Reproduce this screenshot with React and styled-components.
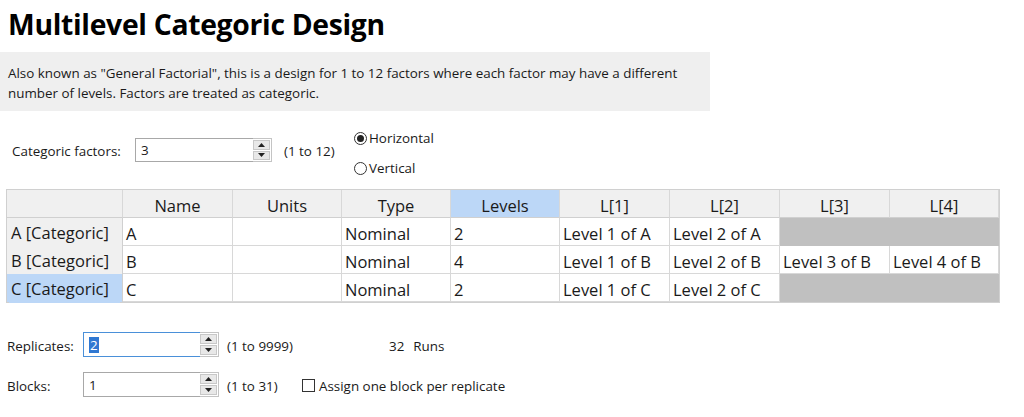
import styled, { createGlobalStyle } from 'styled-components';

const GlobalStyle = createGlobalStyle`
  body {
    margin: 0;
    background: #ffffff;
    font-family: 'Open Sans', 'Noto Sans', sans-serif;
    color: #1a1a1a;
  }
`;

const columns = [
  { label: 'Name', width: 110 },
  { label: 'Units', width: 109 },
  { label: 'Type', width: 109 },
  { label: 'Levels', width: 109 },
  { label: 'L[1]', width: 110 },
  { label: 'L[2]', width: 110 },
  { label: 'L[3]', width: 110 },
  { label: 'L[4]', width: 109 },
];

const factors = [
  { id: 'A', levels: 2 },
  { id: 'B', levels: 4 },
  { id: 'C', levels: 2, selected: true },
];

const Spinner = () => (
  <SpinBox>
    <SpinButton>
      <svg width="7" height="4" viewBox="0 0 7 4">
        <path d="M0 4 L3.5 0 L7 4 Z" fill="#222" />
      </svg>
    </SpinButton>
    <SpinButton>
      <svg width="7" height="4" viewBox="0 0 7 4">
        <path d="M0 0 L3.5 4 L7 0 Z" fill="#222" />
      </svg>
    </SpinButton>
  </SpinBox>
);

const NumberField = ({ value, width, height = 24, focused }) => (
  <Field $width={width} $height={height}>
    <FieldInput $focused={focused}>
      {focused ? <Selected>{value}</Selected> : value}
    </FieldInput>
    <Spinner />
  </Field>
);

const App = () => (
  <Page>
    <GlobalStyle />
    <Title>Multilevel Categoric Design</Title>
    <Description>
      Also known as &quot;General Factorial&quot;, this is a design for 1 to 12 factors where each factor may have a
      different
      <br />
      number of levels. Factors are treated as categoric.
    </Description>

    <FactorRow>
      <Label>Categoric factors:</Label>
      <NumberField value="3" width={137} />
      <Hint $gap={12} $width={70}>
        (1 to 12)
      </Hint>
      <RadioGroup>
        <RadioOption>
          <Radio $checked />
          Horizontal
        </RadioOption>
        <RadioOption>
          <Radio />
          Vertical
        </RadioOption>
      </RadioGroup>
    </FactorRow>

    <Grid $template={columns.map((c) => `${c.width}px`).join(' ')}>
      <Corner />
      {columns.map((col) => (
        <HeadCell key={col.label} $selected={col.label === 'Levels'}>
          {col.label}
        </HeadCell>
      ))}
      {factors.map((f) => (
        <Row key={f.id}>
          <RowHead $selected={f.selected}>
            <span>{f.id} [Categoric]</span>
          </RowHead>
          <Cell>{f.id}</Cell>
          <Cell />
          <Cell>Nominal</Cell>
          <Cell>{f.levels}</Cell>
          {[1, 2, 3, 4].map((n) =>
            n <= f.levels ? (
              <Cell key={n}>
                Level {n} of {f.id}
              </Cell>
            ) : (
              <Cell key={n} $disabled />
            ),
          )}
        </Row>
      ))}
    </Grid>

    <Options>
      <OptionRow>
        <OptionLabel>Replicates:</OptionLabel>
        <NumberField value="2" width={136} height={25} focused />
        <Hint $gap={8} $width={162}>
          (1 to 9999)
        </Hint>
        <Runs>
          <span>32</span>
          <span>Runs</span>
        </Runs>
      </OptionRow>
      <OptionRow>
        <OptionLabel>Blocks:</OptionLabel>
        <NumberField value="1" width={136} height={25} />
        <Hint $gap={8} $width={75}>
          (1 to 31)
        </Hint>
        <CheckLabel>
          <Checkbox />
          Assign one block per replicate
        </CheckLabel>
      </OptionRow>
    </Options>
  </Page>
);

export default App;

const Page = styled.div`
  width: 1024px;
  height: 417px;
  overflow: hidden;
  padding-top: 5px;
  box-sizing: border-box;
  font-size: 13.4px;
`;

const Title = styled.h1`
  margin: 0 0 0 8px;
  font-size: 28.3px;
  font-weight: 700;
  line-height: 38px;
  letter-spacing: -0.3px;
  color: #000;
`;

const Description = styled.p`
  margin: 9px 0 0;
  width: 710px;
  box-sizing: border-box;
  padding: 11px 10px 8px 8px;
  background: #efefef;
  font-size: 13.4px;
  line-height: 20px;
  white-space: nowrap;
  color: #1a1a1a;
`;

const FactorRow = styled.div`
  display: flex;
  align-items: center;
  margin-top: 27px;
  padding-left: 12px;
  height: 24px;
`;

const Label = styled.span`
  width: 123px;
  padding-top: 2px;
`;

const Field = styled.div`
  display: flex;
  align-items: center;
  width: ${({ $width }) => $width}px;
  height: ${({ $height }) => $height}px;
  flex-shrink: 0;
`;

const FieldInput = styled.div`
  flex: 1;
  height: 100%;
  box-sizing: border-box;
  display: flex;
  align-items: center;
  padding-left: 5px;
  border: 1px solid ${({ $focused }) => ($focused ? '#4a90d9' : '#a8a8a8')};
  border-right: none;
  background: #fff;
`;

const Selected = styled.span`
  background: #3078d2;
  color: #fff;
  padding: 0 1px;
  line-height: 16px;
`;

const SpinBox = styled.div`
  display: flex;
  flex-direction: column;
  gap: 1px;
  height: 100%;
  padding: 1px 1px 1px 0;
  box-sizing: border-box;
  border: 1px solid #c4c4c4;
  border-left: none;
  background: #fff;
`;

const SpinButton = styled.div`
  width: 17px;
  flex: 1;
  display: flex;
  align-items: center;
  justify-content: center;
  background: #e8e8e8;
  border: 1px solid #c8c8c8;
  box-sizing: border-box;
`;

const Hint = styled.span`
  margin-left: ${({ $gap }) => $gap}px;
  width: ${({ $width }) => $width}px;
  padding-top: 2px;
  flex-shrink: 0;
`;

const RadioGroup = styled.div`
  display: flex;
  flex-direction: column;
  gap: 11px;
  margin-top: 7px;
`;

const RadioOption = styled.label`
  display: flex;
  align-items: center;
  gap: 2px;
  line-height: 19px;
`;

const Radio = styled.span`
  width: 13px;
  height: 13px;
  border: 1px solid #333;
  border-radius: 50%;
  box-sizing: border-box;
  display: flex;
  align-items: center;
  justify-content: center;
  &::after {
    content: '';
    width: 7px;
    height: 7px;
    border-radius: 50%;
    background: ${({ $checked }) => ($checked ? '#222' : 'transparent')};
  }
`;

const Grid = styled.div`
  display: grid;
  grid-template-columns: 116px ${({ $template }) => $template};
  grid-template-rows: 28px repeat(3, 28px);
  width: max-content;
  margin: 27px 0 0 6px;
  border: 1px solid #d0d0d0;
  font-size: 16.5px;
  background: #f0f0f0;
`;

const Row = styled.div`
  display: contents;
`;

const Corner = styled.div`
  background: #f0f0f0;
  border-right: 1px solid #d8d8d8;
  border-bottom: 1px solid #d0d0d0;
`;

const HeadCell = styled.div`
  display: flex;
  align-items: center;
  justify-content: center;
  padding-top: 3px;
  background: ${({ $selected }) => ($selected ? '#bcd7f7' : '#f0f0f0')};
  border-right: 1px solid #d8d8d8;
  border-bottom: 1px solid #d0d0d0;
  &:last-of-type {
    border-right: none;
  }
`;

const RowHead = styled.div`
  display: flex;
  align-items: center;
  padding: 2px 2px 0 2px;
  white-space: nowrap;
  background: ${({ $selected }) => ($selected ? '#bcd7f7' : '#f0f0f0')};
  border-right: 1px solid #d0d0d0;
  span {
    flex: 1;
    height: 100%;
    display: flex;
    align-items: center;
    padding-left: 2px;
    border-bottom: 1px solid ${({ $selected }) => ($selected ? '#bcd7f7' : '#a8a8a8')};
  }
`;

const Cell = styled.div`
  display: flex;
  align-items: center;
  padding: 3px 0 0 3px;
  white-space: nowrap;
  background: ${({ $disabled }) => ($disabled ? '#c0c0c0' : '#fff')};
  border-right: 1px solid ${({ $disabled }) => ($disabled ? '#c0c0c0' : '#d8d8d8')};
  border-bottom: 1px solid ${({ $disabled }) => ($disabled ? '#c0c0c0' : '#d8d8d8')};
`;

const Options = styled.div`
  display: flex;
  flex-direction: column;
  gap: 15px;
  margin-top: 29px;
  padding-left: 7px;
`;

const OptionRow = styled.div`
  display: flex;
  align-items: center;
  height: 25px;
`;

const OptionLabel = styled.span`
  width: 76px;
  padding-top: 2px;
`;

const Runs = styled.span`
  display: flex;
  gap: 9px;
  padding-top: 2px;
`;

const CheckLabel = styled.label`
  display: flex;
  align-items: center;
  gap: 4px;
  padding-top: 2px;
`;

const Checkbox = styled.span`
  width: 13px;
  height: 13px;
  border: 1px solid #333;
  box-sizing: border-box;
  background: #fff;
`;
